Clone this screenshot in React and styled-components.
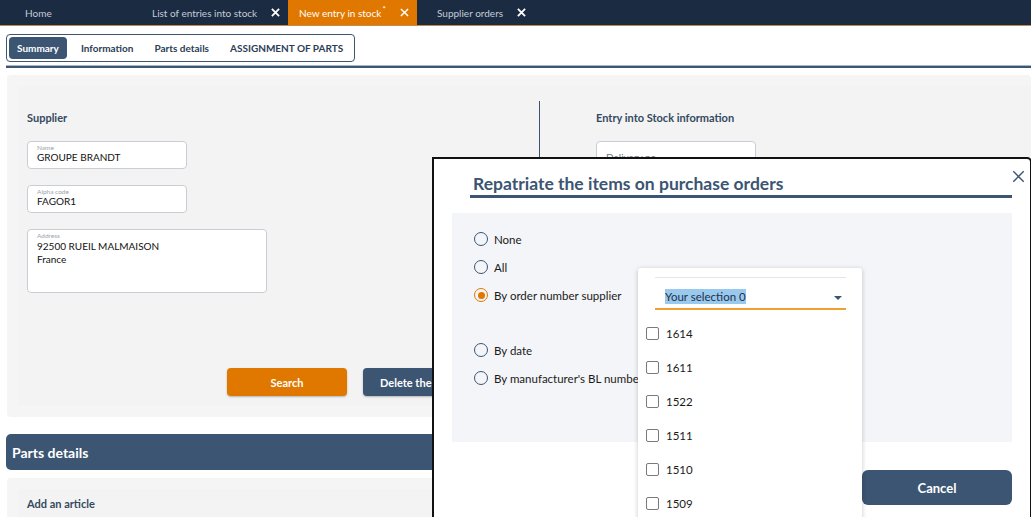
import React from "react";
import styled, { createGlobalStyle } from "styled-components";

const GlobalStyle = createGlobalStyle`
    html, body {
        margin: 0;
        padding: 0;
        background: #ffffff;
        font-family: "Lato", "Noto Sans", sans-serif;
        overflow: hidden;
    }
    * { box-sizing: border-box; }
`;

const Root = styled.div`
    position: relative;
    width: 1031px;
    height: 517px;
    overflow: hidden;
`;

const TabBar = styled.div`
    display: flex;
    height: 26px;
    background: #1b2b42;
    border-bottom: 1px solid #c58a4a;
`;

const Tab = styled.div`
    display: flex;
    align-items: center;
    width: ${(p) => p.$w}px;
    padding-left: ${(p) => p.$pl}px;
    background: ${(p) => (p.$active ? "#e07800" : "transparent")};
    color: ${(p) => (p.$active ? "#ffffff" : "#c3ccd8")};
    font-size: 10px;
    white-space: nowrap;
`;

const Star = styled.span`
    position: relative;
    top: -4px;
    font-size: 8px;
    margin-left: 1px;
`;

const TabClose = styled.span`
    display: inline-flex;
    margin-left: ${(p) => p.$ml}px;
    color: #ffffff;
`;

const SubNav = styled.div`
    height: 39px;
    padding: 8px 0 0 6px;
`;

const SubTabBox = styled.div`
    display: inline-flex;
    align-items: center;
    height: 28px;
    width: 349px;
    padding: 0 2px;
    border: 1px solid #3b5573;
    border-radius: 4px;
`;

const SubTab = styled.div`
    display: flex;
    align-items: center;
    height: 22px;
    padding: 0 ${(p) => p.$px}px;
    border-radius: 4px;
    background: ${(p) => (p.$active ? "#3b5573" : "transparent")};
    color: ${(p) => (p.$active ? "#ffffff" : "#2c3e55")};
    font-size: 10px;
    font-weight: 700;
    white-space: nowrap;
`;

const SubSep = styled.div`
    width: 1px;
    height: 22px;
    margin: 0 0 0 3px;
    background: #2c3e55;
`;

const Rule = styled.div`
    height: 3px;
    margin-left: 6px;
    border-top: 1px solid #aab6c4;
    background: #3b5573;
`;

const Main = styled.div`
    padding: 7px 0 0 7px;
`;

const Card = styled.div`
    background: #f5f5f6;
    border-radius: 4px;
    padding: 11px 0 ${(p) => p.$pb}px 11px;
    height: ${(p) => p.$h}px;
`;

const CardInner = styled.div`
    display: flex;
    height: 100%;
    background: #f3f3f4;
`;

const Column = styled.div`
    display: flex;
    flex-direction: column;
    width: ${(p) => p.$w}px;
    padding: ${(p) => p.$pt}px 0 0 ${(p) => p.$pl}px;
`;

const Divider = styled.div`
    width: 1px;
    height: 300px;
    margin-top: 15px;
    background: #3b5573;
`;

const SectionTitle = styled.div`
    font-size: 11px;
    font-weight: 700;
    color: #34495e;
    line-height: 14px;
`;

const Field = styled.div`
    display: flex;
    flex-direction: column;
    width: ${(p) => p.$w}px;
    height: ${(p) => p.$h}px;
    margin-top: ${(p) => p.$mt}px;
    padding: ${(p) => p.$pt || 2}px 0 0 9px;
    background: #ffffff;
    border: 1px solid #c9ced6;
    border-radius: 4px;
`;

const FieldLabel = styled.div`
    font-size: 6.5px;
    color: #9aa3ad;
    line-height: 8px;
`;

const FieldValue = styled.div`
    font-size: 10px;
    color: ${(p) => (p.$muted ? "#6d7782" : "#111")};
    line-height: ${(p) => p.$lh || 11}px;
`;

const ButtonRow = styled.div`
    display: flex;
    gap: 16px;
    margin-top: 75px;
    padding-left: 200px;
`;

const ActionButton = styled.div`
    display: flex;
    align-items: center;
    justify-content: center;
    flex-shrink: 0;
    width: 120px;
    height: 28px;
    border-radius: 4px;
    background: ${(p) => p.$bg};
    color: #ffffff;
    font-size: 11px;
    font-weight: 700;
    box-shadow: 0 1px 2px rgba(0, 0, 0, 0.25);
    white-space: nowrap;
`;

const SectionBar = styled.div`
    display: flex;
    align-items: center;
    height: 36px;
    margin: 17px 0 8px -1px;
    padding-left: 6px;
    border-radius: 5px;
    background: #3b5573;
    color: #ffffff;
    font-size: 14px;
    font-weight: 700;
`;

const Modal = styled.div`
    position: absolute;
    left: 432px;
    top: 157px;
    width: 600px;
    height: 380px;
    padding: 0 18px;
    background: #ffffff;
    border: 2px solid #111111;
    border-top-right-radius: 5px;
`;

const ModalHeader = styled.div`
    position: relative;
    margin: 13px 0 0 18px;
    padding: 0 0 0 3px;
    border-bottom: 3px solid #3b5573;
    color: #3b5573;
    font-size: 17.5px;
    font-weight: 700;
    line-height: 23px;
`;

const CloseButton = styled.div`
    position: absolute;
    right: -13px;
    top: -2px;
    display: flex;
    color: #3b5573;
`;

const ModalBody = styled.div`
    display: flex;
    flex-direction: column;
    height: 229px;
    margin-top: 15px;
    padding: 19px 0 0 22px;
    background: #f4f5f8;
`;

const RadioRow = styled.div`
    display: flex;
    align-items: center;
    gap: 6px;
    height: 14px;
    margin-bottom: ${(p) => p.$mb}px;
    font-size: 11.5px;
    color: #1a1a1a;
    white-space: nowrap;
`;

const RadioCircle = styled.span`
    display: flex;
    align-items: center;
    justify-content: center;
    width: 14px;
    height: 14px;
    border-radius: 50%;
    border: 1.5px solid ${(p) => (p.$checked ? "#e07800" : "#3b5573")};
    &::after {
        content: "";
        display: ${(p) => (p.$checked ? "block" : "none")};
        width: 7px;
        height: 7px;
        border-radius: 50%;
        background: #e07800;
    }
`;

const ModalFooter = styled.div`
    display: flex;
    justify-content: flex-end;
    margin-top: 28px;
`;

const CancelButton = styled.div`
    display: flex;
    align-items: center;
    justify-content: center;
    width: 150px;
    height: 35px;
    border-radius: 6px;
    background: #3b5573;
    color: #ffffff;
    font-size: 13px;
    font-weight: 700;
`;

const Dropdown = styled.div`
    position: absolute;
    left: 204px;
    top: 109px;
    width: 224px;
    height: 280px;
    padding: 9px 16px 0 8px;
    background: #ffffff;
    border-radius: 3px;
    box-shadow: 0 1px 5px rgba(0, 0, 0, 0.22);
`;

const SelectBox = styled.div`
    display: flex;
    align-items: center;
    justify-content: space-between;
    height: 33px;
    margin-left: 9px;
    padding: 6px 4px 0 10px;
    border-top: 1px solid #e4e6ea;
    border-bottom: 2px solid #f0a030;
    font-size: 11.5px;
    color: #1f3146;
`;

const Highlight = styled.span`
    background: #99c9ef;
    padding: 1px 0;
`;

const Caret = styled.span`
    width: 0;
    height: 0;
    border-left: 4px solid transparent;
    border-right: 4px solid transparent;
    border-top: 4px solid #3b5573;
    margin-top: 3px;
`;

const OptionList = styled.div`
    display: flex;
    flex-direction: column;
    gap: 20px;
    padding-top: 16px;
`;

const Option = styled.div`
    display: flex;
    align-items: center;
    gap: 7px;
    height: 14px;
    font-size: 11.5px;
    color: #1a1a1a;
`;

const CheckBox = styled.span`
    width: 13px;
    height: 13px;
    border: 1.5px solid #7a7a7a;
    border-radius: 2px;
    background: #ffffff;
`;

const CloseX = ({ size = 9, stroke = 2 }) => (
    <svg width={size} height={size} viewBox="0 0 10 10">
        <path d="M1 1 L9 9 M9 1 L1 9" stroke="currentColor" strokeWidth={stroke} />
    </svg>
);

const orders = ["1614", "1611", "1522", "1511", "1510", "1509"];

function App() {
    return (
        <Root>
            <GlobalStyle />
            <TabBar>
                <Tab $w={147} $pl={25}>Home</Tab>
                <Tab $w={141} $pl={5}>
                    List of entries into stock
                    <TabClose $ml={14}><CloseX /></TabClose>
                </Tab>
                <Tab $w={129} $pl={11} $active>
                    New entry in stock<Star>*</Star>
                    <TabClose $ml={14}><CloseX stroke={1.6} /></TabClose>
                </Tab>
                <Tab $w={200} $pl={20}>
                    Supplier orders
                    <TabClose $ml={14}><CloseX /></TabClose>
                </Tab>
            </TabBar>

            <SubNav>
                <SubTabBox>
                    <SubTab $active $px={8}>Summary</SubTab>
                    <SubSep />
                    <SubTab $px={11}>Information</SubTab>
                    <SubTab $px={10}>Parts details</SubTab>
                    <SubTab $px={11}>ASSIGNMENT OF PARTS</SubTab>
                </SubTabBox>
            </SubNav>
            <Rule />

            <Main>
                <Card $h={342} $pb={12}>
                    <CardInner>
                        <Column $w={521} $pt={25} $pl={9}>
                            <SectionTitle>Supplier</SectionTitle>
                            <Field $w={160} $h={28} $mt={16}>
                                <FieldLabel>Name</FieldLabel>
                                <FieldValue>GROUPE BRANDT</FieldValue>
                            </Field>
                            <Field $w={160} $h={28} $mt={16}>
                                <FieldLabel>Alpha code</FieldLabel>
                                <FieldValue>FAGOR1</FieldValue>
                            </Field>
                            <Field $w={240} $h={64} $mt={16}>
                                <FieldLabel>Address</FieldLabel>
                                <FieldValue $lh={13}>92500 RUEIL MALMAISON</FieldValue>
                                <FieldValue $lh={13}>France</FieldValue>
                            </Field>
                            <ButtonRow>
                                <ActionButton $bg="#e07800">Search</ActionButton>
                                <ActionButton $bg="#3b5573">Delete the search</ActionButton>
                            </ButtonRow>
                        </Column>
                        <Divider />
                        <Column $w={400} $pt={25} $pl={56}>
                            <SectionTitle>Entry into Stock information</SectionTitle>
                            <Field $w={160} $h={28} $mt={16} $pt={10}>
                                <FieldValue $muted>Delivery no</FieldValue>
                            </Field>
                        </Column>
                    </CardInner>
                </Card>

                <SectionBar>Parts details</SectionBar>

                <Card $h={80} $pb={0}>
                    <CardInner>
                        <Column $w={400} $pt={8} $pl={9}>
                            <SectionTitle>Add an article</SectionTitle>
                        </Column>
                    </CardInner>
                </Card>
            </Main>

            <Modal>
                <ModalHeader>
                    Repatriate the items on purchase orders
                    <CloseButton><CloseX size={13} stroke={1.1} /></CloseButton>
                </ModalHeader>
                <ModalBody>
                    <RadioRow $mb={14}><RadioCircle />None</RadioRow>
                    <RadioRow $mb={14}><RadioCircle />All</RadioRow>
                    <RadioRow $mb={41}><RadioCircle $checked />By order number supplier</RadioRow>
                    <RadioRow $mb={14}><RadioCircle />By date</RadioRow>
                    <RadioRow $mb={0}><RadioCircle />By manufacturer's BL number</RadioRow>
                </ModalBody>
                <ModalFooter>
                    <CancelButton>Cancel</CancelButton>
                </ModalFooter>

                <Dropdown>
                    <SelectBox>
                        <Highlight>Your selection 0</Highlight>
                        <Caret />
                    </SelectBox>
                    <OptionList>
                        {orders.map((o) => (
                            <Option key={o}>
                                <CheckBox />
                                {o}
                            </Option>
                        ))}
                    </OptionList>
                </Dropdown>
            </Modal>
        </Root>
    );
}

export default App;
